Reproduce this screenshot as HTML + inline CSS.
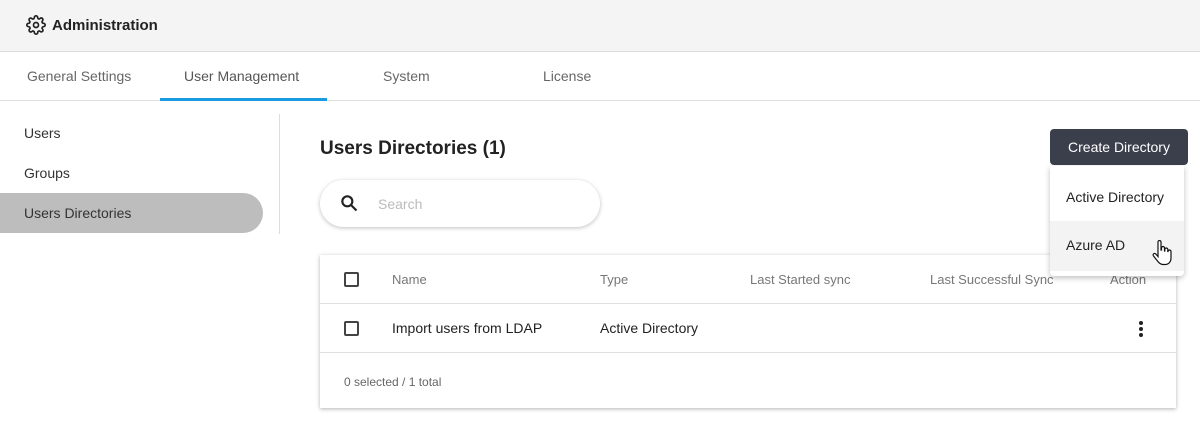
<!DOCTYPE html>
<html><head><style>
*{box-sizing:border-box;margin:0;padding:0}
body{width:1200px;height:437px;background:#fff;font-family:"Liberation Sans",sans-serif;position:relative;overflow:hidden;color:#222}
.abs{position:absolute}
.hdr{left:0;top:0;width:1200px;height:52px;background:#f4f4f4;border-bottom:1px solid #ddd}
.tabs{left:0;top:52px;width:1200px;height:49px;border-bottom:1px solid #e0e0e0}
.tab{position:absolute;top:16px;font-size:14px;color:#666}
.side{font-size:14px;color:#333}
.card{left:320px;top:255px;width:856px;height:153px;background:#fff;box-shadow:0 1px 4px rgba(0,0,0,.3)}
.cb{position:absolute;width:15px;height:15px;border:2px solid #444;border-radius:2px}
.th{position:absolute;top:17px;font-size:13px;color:#777}
</style></head><body>
<div class="abs hdr">
<svg class="abs" style="left:26px;top:15px" width="20" height="20" viewBox="0 0 24 24" fill="none" stroke="#222" stroke-width="2"><circle cx="12" cy="12" r="3"/><path d="M19.4 15a1.65 1.65 0 0 0 .33 1.82l.06.06a2 2 0 1 1-2.83 2.83l-.06-.06a1.65 1.65 0 0 0-1.82-.33 1.65 1.65 0 0 0-1 1.51V21a2 2 0 1 1-4 0v-.09A1.65 1.65 0 0 0 9 19.4a1.65 1.65 0 0 0-1.82.33l-.06.06a2 2 0 1 1-2.83-2.83l.06-.06A1.65 1.65 0 0 0 4.68 15a1.65 1.65 0 0 0-1.51-1H3a2 2 0 1 1 0-4h.09A1.65 1.65 0 0 0 4.6 9a1.65 1.65 0 0 0-.33-1.82l-.06-.06a2 2 0 1 1 2.83-2.83l.06.06A1.65 1.65 0 0 0 9 4.68a1.65 1.65 0 0 0 1-1.51V3a2 2 0 1 1 4 0v.09a1.65 1.65 0 0 0 1 1.51 1.65 1.65 0 0 0 1.82-.33l.06-.06a2 2 0 1 1 2.83 2.83l-.06.06A1.65 1.65 0 0 0 19.4 9a1.65 1.65 0 0 0 1.51 1H21a2 2 0 1 1 0 4h-.09a1.65 1.65 0 0 0-1.51 1z"/></svg>
<div class="abs" style="left:52px;top:17px;font-size:15px;font-weight:bold;color:#222">Administration</div>
</div>
<div class="abs tabs">
<div class="tab" style="left:27px">General Settings</div>
<div class="tab" style="left:184px;color:#555">User Management</div>
<div class="tab" style="left:383px">System</div>
<div class="tab" style="left:543px">License</div>
<div class="abs" style="left:160px;top:46px;width:167px;height:3px;background:#1a9be0"></div>
</div>
<div class="abs side" style="left:24px;top:125px">Users</div>
<div class="abs side" style="left:24px;top:165px">Groups</div>
<div class="abs" style="left:0;top:193px;width:263px;height:40px;background:#bdbdbd;border-radius:0 20px 20px 0"></div>
<div class="abs side" style="left:24px;top:205px">Users Directories</div>
<div class="abs" style="left:279px;top:114px;width:1px;height:120px;background:#ddd"></div>
<div class="abs" style="left:320px;top:138px;font-size:19px;font-weight:bold;color:#222">Users Directories (1)</div>
<div class="abs" style="left:320px;top:180px;width:280px;height:47px;border-radius:24px;box-shadow:0 1px 4px rgba(0,0,0,.25);background:#fff"></div>
<svg class="abs" style="left:339px;top:193px" width="20" height="20" viewBox="0 0 24 24" fill="none" stroke="#222" stroke-width="2.6"><circle cx="10" cy="10" r="6"/><path d="M15 15l6 6"/></svg>
<div class="abs" style="left:378px;top:196px;font-size:14px;color:#bbb">Search</div>
<div class="card abs">
<div class="cb" style="left:24px;top:17px"></div>
<div class="th" style="left:72px">Name</div>
<div class="th" style="left:280px">Type</div>
<div class="th" style="left:430px">Last Started sync</div>
<div class="th" style="left:610px">Last Successful Sync</div>
<div class="th" style="left:790px">Action</div>
<div class="abs" style="left:0;top:48px;width:856px;height:1px;background:#e0e0e0"></div>
<div class="cb" style="left:24px;top:66px"></div>
<div class="abs" style="left:72px;top:65px;font-size:14px">Import users from LDAP</div>
<div class="abs" style="left:280px;top:65px;font-size:14px">Active Directory</div>
<div class="abs" style="left:819px;top:66px;width:4px;height:4px;border-radius:2px;background:#222;box-shadow:0 6px 0 #222,0 12px 0 #222"></div>
<div class="abs" style="left:0;top:97px;width:856px;height:1px;background:#e0e0e0"></div>
<div class="abs" style="left:24px;top:120px;font-size:12px;color:#666">0 selected / 1 total</div>
</div>
<div class="abs" style="left:1050px;top:129px;width:138px;height:36px;background:#3b3f4c;border-radius:4px;color:#fff;font-size:14px;text-align:center;line-height:36px">Create Directory</div>
<div class="abs" style="left:1050px;top:166px;width:134px;height:110px;background:#fff;box-shadow:0 2px 6px rgba(0,0,0,.25);border-radius:0 0 4px 4px">
<div class="abs" style="left:16px;top:23px;font-size:14px">Active Directory</div>
<div class="abs" style="left:0;top:55px;width:134px;height:50px;background:#f3f3f3"></div>
<div class="abs" style="left:16px;top:71px;font-size:14px">Azure AD</div>
<svg class="abs" style="left:102px;top:74px" width="20" height="26" viewBox="0 0 20 26" fill="#fff" stroke="#111" stroke-width="1.2"><path d="M6 2a1.5 1.5 0 0 1 3 0v8h.5V8a1.5 1.5 0 0 1 3 0v3h.3V9.5a1.5 1.5 0 0 1 3 0v2h.2a1.5 1.5 0 0 1 3 0V18c0 4-2.5 6.5-6 6.5h-2c-2.5 0-4-1.5-5.5-3.5L1.5 16a1.5 1.5 0 0 1 2.3-2L6 16.5z"/></svg>
</div>
</body></html>
